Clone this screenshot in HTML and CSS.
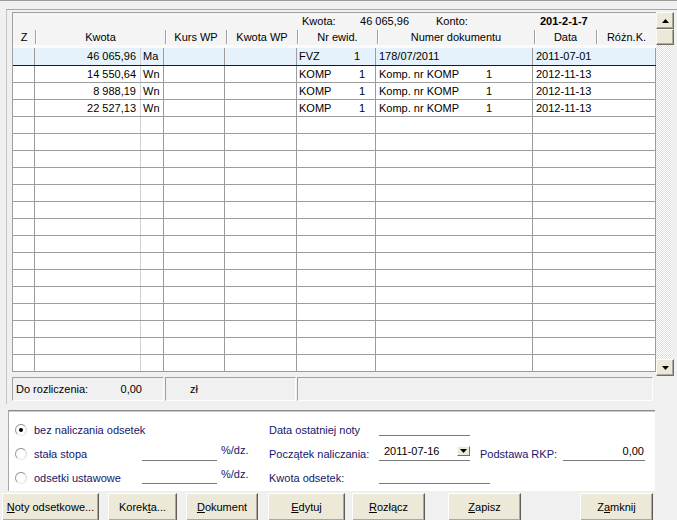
FILE: index.html
```html
<!DOCTYPE html>
<html lang="pl">
<head>
<meta charset="utf-8">
<title>Rozrachunki</title>
<link rel="stylesheet" href="styles.css">
</head>
<body>
<div class="topline"></div>
<div class="panel">
  <div class="main">
    <div class="grid">
      <div class="info">
        <span class="info-label">Kwota:</span>
        <span class="info-amount">46 065,96</span>
        <span class="info-konto">Konto:</span>
        <span class="info-account">201-2-1-7</span>
      </div>
      <div class="head">
        <div class="hc hc-z">Z</div>
        <div class="hc hc-kwota">Kwota</div>
        <div class="hc hc-kurs">Kurs WP</div>
        <div class="hc hc-kwp">Kwota WP</div>
        <div class="hc hc-nr">Nr ewid.</div>
        <div class="hc hc-doc">Numer dokumentu</div>
        <div class="hc hc-data">Data</div>
        <div class="hc hc-roz">Różn.K.</div>
      </div>
      <div class="gap"></div>
      <div class="rows">
        <div class="row selected">
          <div class="c c-z"></div>
          <div class="c c-kwota">46 065,96</div>
          <div class="c c-side">Ma</div>
          <div class="c c-kurs"></div>
          <div class="c c-kwp"></div>
          <div class="c c-nr c-nr-short"><span>FVZ</span><span>1</span></div>
          <div class="c c-doc">178/07/2011</div>
          <div class="c c-data">2011-07-01</div>
        </div>
        <div class="row">
          <div class="c c-z"></div>
          <div class="c c-kwota">14 550,64</div>
          <div class="c c-side">Wn</div>
          <div class="c c-kurs"></div>
          <div class="c c-kwp"></div>
          <div class="c c-nr"><span>KOMP</span><span>1</span></div>
          <div class="c c-doc"><span class="doc-name">Komp. nr KOMP</span><span>1</span></div>
          <div class="c c-data">2012-11-13</div>
        </div>
        <div class="row">
          <div class="c c-z"></div>
          <div class="c c-kwota">8 988,19</div>
          <div class="c c-side">Wn</div>
          <div class="c c-kurs"></div>
          <div class="c c-kwp"></div>
          <div class="c c-nr"><span>KOMP</span><span>1</span></div>
          <div class="c c-doc"><span class="doc-name">Komp. nr KOMP</span><span>1</span></div>
          <div class="c c-data">2012-11-13</div>
        </div>
        <div class="row">
          <div class="c c-z"></div>
          <div class="c c-kwota">22 527,13</div>
          <div class="c c-side">Wn</div>
          <div class="c c-kurs"></div>
          <div class="c c-kwp"></div>
          <div class="c c-nr"><span>KOMP</span><span>1</span></div>
          <div class="c c-doc"><span class="doc-name">Komp. nr KOMP</span><span>1</span></div>
          <div class="c c-data">2012-11-13</div>
        </div>
        <div class="row"><div class="c c-z"></div><div class="c c-kwota"></div><div class="c c-side"></div><div class="c c-kurs"></div><div class="c c-kwp"></div><div class="c c-nr"></div><div class="c c-doc"></div><div class="c c-data"></div></div>
        <div class="row"><div class="c c-z"></div><div class="c c-kwota"></div><div class="c c-side"></div><div class="c c-kurs"></div><div class="c c-kwp"></div><div class="c c-nr"></div><div class="c c-doc"></div><div class="c c-data"></div></div>
        <div class="row"><div class="c c-z"></div><div class="c c-kwota"></div><div class="c c-side"></div><div class="c c-kurs"></div><div class="c c-kwp"></div><div class="c c-nr"></div><div class="c c-doc"></div><div class="c c-data"></div></div>
        <div class="row"><div class="c c-z"></div><div class="c c-kwota"></div><div class="c c-side"></div><div class="c c-kurs"></div><div class="c c-kwp"></div><div class="c c-nr"></div><div class="c c-doc"></div><div class="c c-data"></div></div>
        <div class="row"><div class="c c-z"></div><div class="c c-kwota"></div><div class="c c-side"></div><div class="c c-kurs"></div><div class="c c-kwp"></div><div class="c c-nr"></div><div class="c c-doc"></div><div class="c c-data"></div></div>
        <div class="row"><div class="c c-z"></div><div class="c c-kwota"></div><div class="c c-side"></div><div class="c c-kurs"></div><div class="c c-kwp"></div><div class="c c-nr"></div><div class="c c-doc"></div><div class="c c-data"></div></div>
        <div class="row"><div class="c c-z"></div><div class="c c-kwota"></div><div class="c c-side"></div><div class="c c-kurs"></div><div class="c c-kwp"></div><div class="c c-nr"></div><div class="c c-doc"></div><div class="c c-data"></div></div>
        <div class="row"><div class="c c-z"></div><div class="c c-kwota"></div><div class="c c-side"></div><div class="c c-kurs"></div><div class="c c-kwp"></div><div class="c c-nr"></div><div class="c c-doc"></div><div class="c c-data"></div></div>
        <div class="row"><div class="c c-z"></div><div class="c c-kwota"></div><div class="c c-side"></div><div class="c c-kurs"></div><div class="c c-kwp"></div><div class="c c-nr"></div><div class="c c-doc"></div><div class="c c-data"></div></div>
        <div class="row"><div class="c c-z"></div><div class="c c-kwota"></div><div class="c c-side"></div><div class="c c-kurs"></div><div class="c c-kwp"></div><div class="c c-nr"></div><div class="c c-doc"></div><div class="c c-data"></div></div>
        <div class="row"><div class="c c-z"></div><div class="c c-kwota"></div><div class="c c-side"></div><div class="c c-kurs"></div><div class="c c-kwp"></div><div class="c c-nr"></div><div class="c c-doc"></div><div class="c c-data"></div></div>
        <div class="row"><div class="c c-z"></div><div class="c c-kwota"></div><div class="c c-side"></div><div class="c c-kurs"></div><div class="c c-kwp"></div><div class="c c-nr"></div><div class="c c-doc"></div><div class="c c-data"></div></div>
        <div class="row"><div class="c c-z"></div><div class="c c-kwota"></div><div class="c c-side"></div><div class="c c-kurs"></div><div class="c c-kwp"></div><div class="c c-nr"></div><div class="c c-doc"></div><div class="c c-data"></div></div>
        <div class="row"><div class="c c-z"></div><div class="c c-kwota"></div><div class="c c-side"></div><div class="c c-kurs"></div><div class="c c-kwp"></div><div class="c c-nr"></div><div class="c c-doc"></div><div class="c c-data"></div></div>
        <div class="row"><div class="c c-z"></div><div class="c c-kwota"></div><div class="c c-side"></div><div class="c c-kurs"></div><div class="c c-kwp"></div><div class="c c-nr"></div><div class="c c-doc"></div><div class="c c-data"></div></div>
      </div>
    </div>
    <div class="scrollbar">
      <div class="sb-btn"><svg width="7" height="4" viewBox="0 0 7 4"><polygon points="0,4 7,4 3.5,0" fill="#000"/></svg></div>
      <div class="sb-thumb"></div>
      <div class="sb-track"></div>
      <div class="sb-btn"><svg width="7" height="4" viewBox="0 0 7 4"><polygon points="0,0 7,0 3.5,4" fill="#000"/></svg></div>
    </div>
  </div>
  <div class="summary">
    <div class="sbox sbox-1"><span>Do rozliczenia:</span><span>0,00</span></div>
    <div class="sbox sbox-2">zł</div>
    <div class="sbox sbox-3"></div>
  </div>
</div>

<div class="options">
  <div class="opt-row">
    <div class="radio-opt radio-wide"><span class="radio checked"></span><span>bez naliczania odsetek</span></div>
    <div class="lbl">Data ostatniej noty</div>
    <div class="field field-short"></div>
  </div>
  <div class="opt-row">
    <div class="radio-opt"><span class="radio"></span><span>stała stopa</span></div>
    <div class="field field-rate"></div>
    <div class="pct">%/dz.</div>
    <div class="lbl">Początek naliczania:</div>
    <div class="field field-date"><span>2011-07-16</span><span class="dd-btn"><svg width="7" height="4" viewBox="0 0 7 4"><polygon points="0,0 7,0 3.5,4" fill="#000"/></svg></span></div>
    <div class="lbl lbl-rkp">Podstawa RKP:</div>
    <div class="field field-rkp">0,00</div>
  </div>
  <div class="opt-row">
    <div class="radio-opt"><span class="radio"></span><span>odsetki ustawowe</span></div>
    <div class="field field-rate"></div>
    <div class="pct">%/dz.</div>
    <div class="lbl">Kwota odsetek:</div>
    <div class="field field-long"></div>
  </div>
</div>

<div class="buttons">
  <div class="btn btn-noty"><u>N</u>oty odsetkowe...</div>
  <div class="btn btn-korekta">Korek<u>t</u>a...</div>
  <div class="btn btn-dokument"><u>D</u>okument</div>
  <div class="btn btn-edytuj"><u>E</u>dytuj</div>
  <div class="btn btn-rozlacz"><u>R</u>ozłącz</div>
  <div class="btn btn-zapisz"><u>Z</u>apisz</div>
  <div class="btn btn-zamknij">Z<u>a</u>mknij</div>
</div>
</body>
</html>
```

FILE: styles.css
```css
* { box-sizing: border-box; }

html, body {
  margin: 0;
  padding: 0;
}

body {
  width: 677px;
  height: 520px;
  overflow: hidden;
  background: #f0f0f0;
  font-family: "Liberation Sans", Arial, sans-serif;
  font-size: 11px;
  color: #000;
}

.topline {
  height: 1px;
  background: #9a9a9a;
}

/* ---------- top panel ---------- */
.panel {
  margin: 8px 0 0 6px;
  border-top: 1px solid #a8a8a8;
  border-left: 1px solid #c4c4c4;
  padding: 2px 0 3px 5px;
}

.main {
  display: flex;
  align-items: flex-start;
}

.grid {
  width: 644px;
  height: 360px;
  border-top: 1px solid #a0a0a0;
  border-left: 1px solid #a0a0a0;
  background: #fff;
}

.info {
  height: 16px;
  display: flex;
  align-items: center;
  padding-left: 289px;
  background: #f4f4f4;
  line-height: 16px;
}

.info-label { width: 58px; }
.info-amount { width: 49px; text-align: right; }
.info-konto { margin-left: 27px; width: 104px; }
.info-account { font-weight: bold; }

.head {
  height: 16px;
  display: flex;
  align-items: center;
  background: #f4f4f4;
}

.hc {
  height: 14px;
  line-height: 14px;
  text-align: center;
  border-left: 1px solid #a0a0a0;
  box-shadow: inset 1px 0 #fff;
  white-space: nowrap;
}

.hc-z { width: 22px; border-left: none; box-shadow: none; }
.hc-kwota { width: 130px; }
.hc-kurs { width: 61px; }
.hc-kwp { width: 71px; }
.hc-nr { width: 80px; }
.hc-doc { width: 157px; }
.hc-data { width: 62px; }
.hc-roz { width: 60px; }

.gap {
  height: 3px;
  background: #fbfbfb;
}

.row {
  display: flex;
  height: 17px;
  border-bottom: 1px solid #9c9c9c;
}

.row.selected {
  height: 18px;
  background: #e5f2fb;
  border-bottom-color: #1a1a1a;
}

.c {
  height: 100%;
  border-right: 1px solid #9c9c9c;
  line-height: 16px;
  white-space: nowrap;
  overflow: hidden;
}

.c-z { width: 22px; }
.c-kwota { width: 106px; text-align: right; padding-right: 4px; border-right-color: #d2d2d2; }
.c-side { width: 23px; padding-left: 2px; }
.c-kurs { width: 61px; }
.c-kwp { width: 72px; }
.c-nr {
  width: 79px;
  display: flex;
  justify-content: space-between;
  padding: 0 10px 0 2px;
}
.c-nr-short { padding-right: 15px; }
.c-doc { width: 157px; padding-left: 3px; }
.doc-name { display: inline-block; width: 107px; }
.c-data { width: 123px; padding-left: 3px; }

/* ---------- scrollbar ---------- */
.scrollbar {
  width: 18px;
  height: 364px;
  display: flex;
  flex-direction: column;
}

.sb-btn, .sb-thumb {
  background: #ece9d8;
  border: 1px solid;
  border-color: #fbfaf6 #716f64 #716f64 #fbfaf6;
  box-shadow: inset -1px -1px #aca899;
}

.sb-btn {
  height: 17px;
  display: flex;
  align-items: center;
  justify-content: center;
}

.sb-btn svg { display: block; }

.sb-thumb { height: 16px; }

.sb-track {
  flex: 1;
  background: repeating-conic-gradient(#ffffff 0 25%, #e2dfd3 0 50%) 0 0 / 2px 2px;
}

/* ---------- summary ---------- */
.summary {
  display: flex;
  margin-top: 1px;
  height: 24px;
}

.sbox {
  height: 24px;
  border-top: 1px solid #a0a0a0;
  border-left: 1px solid #a0a0a0;
  border-right: 1px solid #fdfdfd;
  border-bottom: 1px solid #fdfdfd;
  line-height: 22px;
}

.sbox-1 {
  width: 152px;
  display: flex;
  justify-content: space-between;
  padding: 0 21px 0 3px;
}

.sbox-2 {
  width: 131px;
  margin-left: 1px;
  padding-left: 24px;
}

.sbox-3 {
  width: 356px;
  margin-left: 1px;
}

/* ---------- options ---------- */
.options {
  margin: 6px 0 0 8px;
  width: 647px;
  background: #fff;
  border-top: 1px solid #8c8c8c;
  border-left: 1px solid #a8a8a8;
  box-shadow: inset 0 1px #c8c8c8;
  padding: 7px 0 1px 0;
  color: #16166a;
}

.opt-row {
  display: flex;
  align-items: center;
  height: 24px;
}

.radio-opt {
  width: 133px;
  display: flex;
  align-items: center;
  padding-left: 6px;
  white-space: nowrap;
}

.radio-wide { width: 260px; }

.radio {
  width: 12px;
  height: 12px;
  margin-right: 7px;
  border-radius: 50%;
  border: 1px solid;
  border-color: #8a8a8a #d4d4d4 #e8e8e8 #9a9a9a;
  background: #fff;
  display: flex;
  align-items: center;
  justify-content: center;
  flex: none;
}

.radio.checked::after {
  content: "";
  width: 4px;
  height: 4px;
  border-radius: 50%;
  background: #000;
}

.lbl {
  width: 110px;
  white-space: nowrap;
}

.lbl-rkp {
  width: 83px;
  margin-left: 10px;
}

.field {
  align-self: flex-start;
  height: 18px;
  border-bottom: 1px solid #7a7a7a;
  color: #000;
}

.field-short { width: 91px; }
.field-rate { width: 75px; height: 19px; }
.opt-row:last-child .field-rate { height: 18px; }
.field-long { width: 111px; }

.field-date {
  width: 91px;
  height: 19px;
  display: flex;
  align-items: center;
  justify-content: space-between;
  padding-left: 5px;
}

.dd-btn {
  width: 13px;
  height: 10px;
  background: #ece9d8;
  border: 1px solid;
  border-color: #fbfaf6 #716f64 #716f64 #fbfaf6;
  display: flex;
  align-items: center;
  justify-content: center;
}

.dd-btn svg { display: block; }

.field-rkp {
  width: 82px;
  height: 19px;
  text-align: right;
  line-height: 19px;
  padding-right: 1px;
}

.pct {
  width: 48px;
  margin-left: 4px;
  align-self: flex-start;
  line-height: 14px;
  padding-top: 1px;
}

/* ---------- buttons ---------- */
.buttons {
  display: flex;
  margin-top: 2px;
}

.btn {
  height: 28px;
  line-height: 26px;
  text-align: center;
  white-space: nowrap;
  background: #ece9d8;
  border: 1px solid;
  border-color: #ffffff #5e5c54 #5e5c54 #ffffff;
  box-shadow: inset -1px -1px #aca899;
}

.btn u { text-underline-offset: 1px; }

.btn-noty { width: 97px; margin-left: 2px; }
.btn-korekta { width: 69px; margin-left: 9px; }
.btn-dokument { width: 72px; margin-left: 9px; }
.btn-edytuj { width: 77px; margin-left: 10px; }
.btn-rozlacz { width: 73px; margin-left: 7px; }
.btn-zapisz { width: 73px; margin-left: 23px; }
.btn-zamknij { width: 73px; margin-left: 59px; }
```
